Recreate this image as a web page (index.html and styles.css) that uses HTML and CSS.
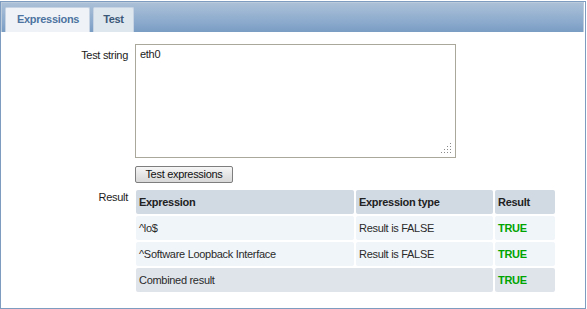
FILE: index.html
```html
<!DOCTYPE html>
<html lang="en">
<head>
    <meta charset="UTF-8">
    <meta name="viewport" content="width=device-width, initial-scale=1.0">
    <title>Regular expression test</title>
    <link rel="stylesheet" href="styles.css">
</head>
<body>
    <div class="panel">
        <div class="tabs">
            <span class="tab">Expressions</span>
            <span class="tab tab-active">Test</span>
        </div>
        <div class="form">
            <label class="form-label label-string" for="test-string">Test string</label>
            <div class="field">
                <div class="textarea-wrap">
                    <textarea id="test-string">eth0</textarea>
                    <!-- resize grip -->
                    <svg class="grip" width="10" height="11" viewBox="0 0 10 11">
                        <rect x="9" y="0" width="1" height="1"/>
                        <rect x="6" y="3" width="1" height="1"/>
                        <rect x="9" y="3" width="1" height="1"/>
                        <rect x="3" y="6" width="1" height="1"/>
                        <rect x="6" y="6" width="1" height="1"/>
                        <rect x="9" y="6" width="1" height="1"/>
                        <rect x="0" y="9" width="1" height="1"/>
                        <rect x="3" y="9" width="1" height="1"/>
                        <rect x="6" y="9" width="1" height="1"/>
                        <rect x="9" y="9" width="1" height="1"/>
                    </svg>
                </div>
                <button class="btn">Test expressions</button>
            </div>

            <div class="form-label label-result">Result</div>
            <table class="results">
                <thead>
                    <tr>
                        <th class="col-expr">Expression</th>
                        <th class="col-type">Expression type</th>
                        <th class="col-result">Result</th>
                    </tr>
                </thead>
                <tbody>
                    <tr>
                        <td>^lo$</td>
                        <td>Result is FALSE</td>
                        <td class="ok">TRUE</td>
                    </tr>
                    <tr>
                        <td>^Software Loopback Interface</td>
                        <td>Result is FALSE</td>
                        <td class="ok">TRUE</td>
                    </tr>
                    <tr class="combined">
                        <td colspan="2">Combined result</td>
                        <td class="ok">TRUE</td>
                    </tr>
                </tbody>
            </table>
        </div>
    </div>
</body>
</html>
```

FILE: styles.css
```css
body {
    margin: 0;
    font-family: "Liberation Sans", Arial, sans-serif;
    font-size: 11px;
    letter-spacing: -0.3px;
    color: #1c1c1c;
    background-color: #fff;
}

.panel {
    box-sizing: border-box;
    width: 586px;
    height: 308px;
    margin-top: 1px;
    border: 1px solid #7d9cc0;
    background-color: #fff;
}

.tabs {
    box-sizing: border-box;
    display: flex;
    gap: 3px;
    height: 30px;
    margin-right: 1px;
    padding: 4px 0 0 3px;
    border: 1px solid #bccbdc;
    border-bottom: none;
    background: linear-gradient(to bottom, #abc0d7 0%, #8eacce 60%, #7a9dc3 100%);
}

.tab {
    box-sizing: border-box;
    height: 25px;
    padding: 5px 10px 0 11px;
    border: 1px solid #c6d3e2;
    border-bottom: none;
    border-radius: 2px 2px 0 0;
    background-color: #eff3f8;
    color: #4d74a0;
    font-weight: bold;
    font-size: 11px;
}

.tab-active {
    padding: 5px 9px 0 9px;
    background-color: #dee6ee;
    color: #3c5878;
}

.form {
    display: grid;
    grid-template-columns: 127px 1fr;
    column-gap: 7px;
    row-gap: 5px;
    padding-top: 12px;
}

.form-label {
    text-align: right;
    line-height: 13px;
}

.label-string {
    padding-top: 5px;
}

.label-result {
    padding-top: 3px;
}

.field {
    display: flex;
    flex-direction: column;
    align-items: flex-start;
}

.textarea-wrap {
    position: relative;
    width: 321px;
    height: 114px;
}

.textarea-wrap textarea {
    box-sizing: border-box;
    display: block;
    width: 321px;
    height: 114px;
    margin: 0;
    padding: 3px 4px;
    border: 1px solid #a9a89a;
    resize: none;
    font-family: "Liberation Sans", Arial, sans-serif;
    font-size: 11px;
    letter-spacing: -0.3px;
    line-height: 13px;
    color: #1c1c1c;
    outline: none;
}

.grip {
    position: absolute;
    right: 5px;
    bottom: 4px;
    fill: #8a8a8a;
}

.btn {
    box-sizing: border-box;
    width: 98px;
    height: 17px;
    margin-top: 8px;
    padding: 0;
    border: 1px solid #7e7e7e;
    border-radius: 2px;
    background: linear-gradient(to bottom, #f6f6f6 0%, #e6e6e6 50%, #d8d8d8 100%);
    font-family: "Liberation Sans", Arial, sans-serif;
    font-size: 11px;
    letter-spacing: -0.3px;
    line-height: 15px;
    color: #111;
}

.results {
    justify-self: start;
    width: 423px;
    margin-left: -1px;
    table-layout: fixed;
    border-collapse: separate;
    border-spacing: 2px;
    font-size: 11px;
}

.results th,
.results td {
    box-sizing: border-box;
    height: 24px;
    padding: 0 3px;
    border-radius: 2px;
    text-align: left;
    vertical-align: middle;
    white-space: nowrap;
}

.results th {
    background-color: #d1d9e2;
    color: #222;
    font-weight: bold;
}

.results td {
    background-color: #f0f5f9;
    color: #2a2a2a;
}

.col-expr {
    width: 218px;
}

.col-type {
    width: 137px;
}

.col-result {
    width: 60px;
}

.results .combined td {
    background-color: #dfe4eb;
}

.results td.ok {
    color: #00a400;
    font-weight: bold;
}
```
